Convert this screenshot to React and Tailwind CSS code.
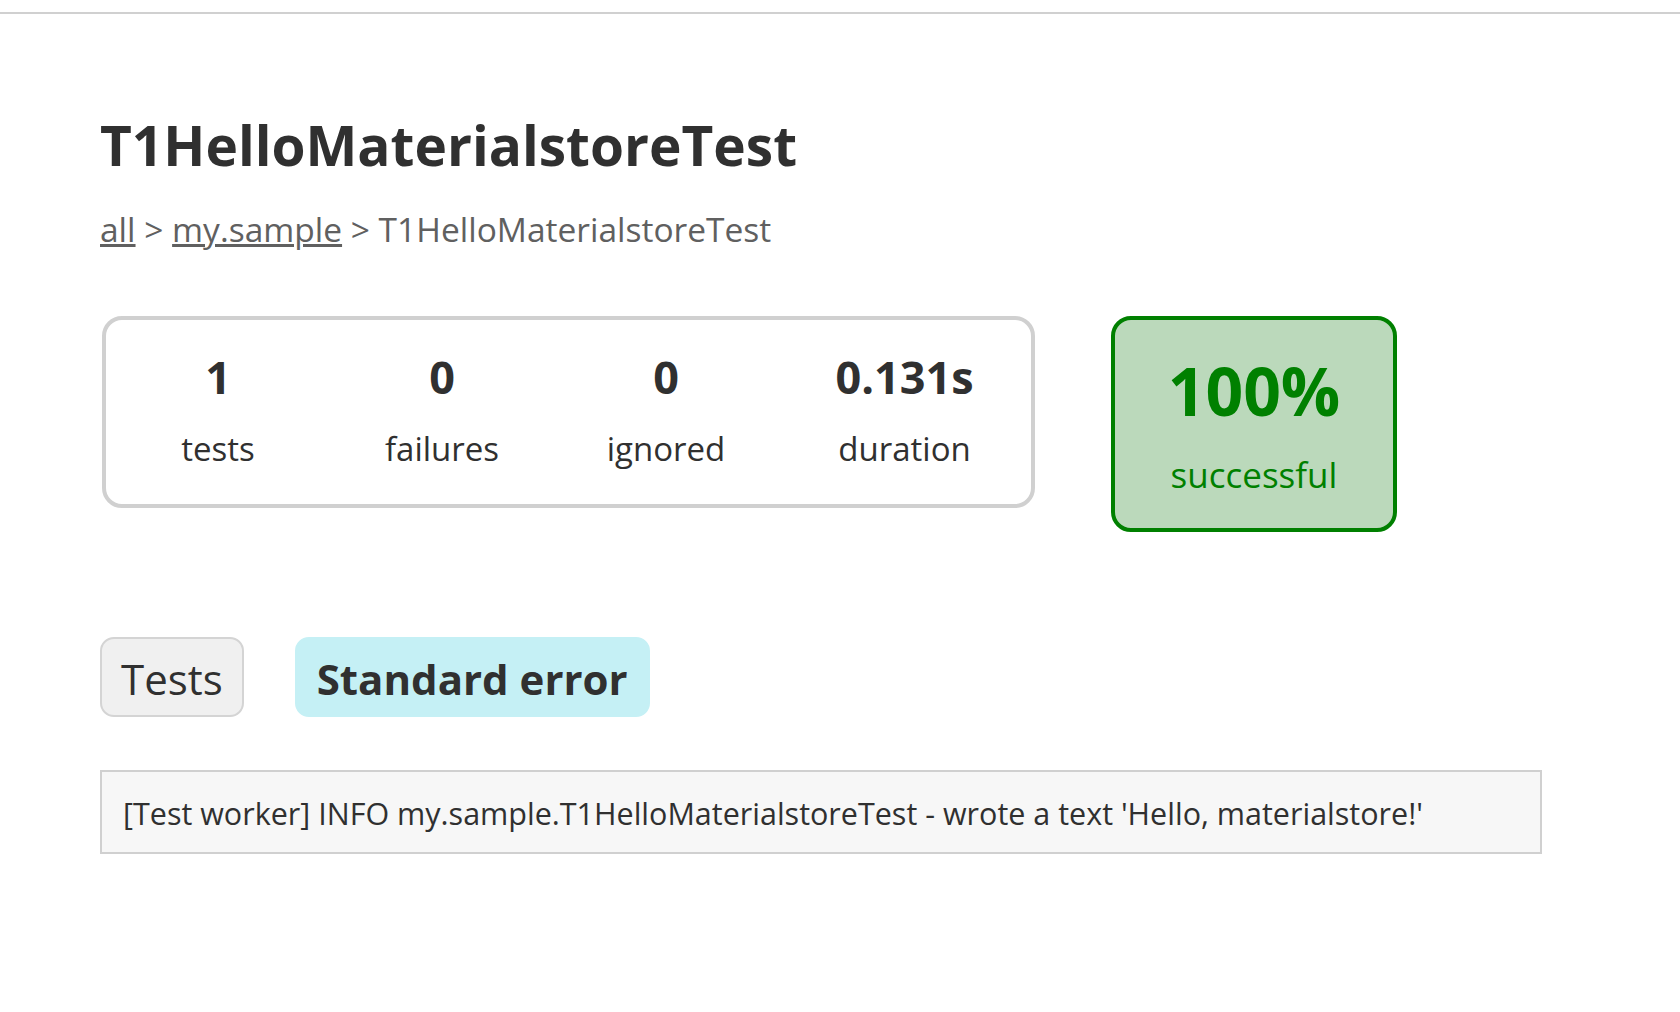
export default function App() {
  const stats = [
    { value: "1", label: "tests", w: "w-[224px]" },
    { value: "0", label: "failures", w: "w-[224px]" },
    { value: "0", label: "ignored", w: "w-[224px]" },
    { value: "0.131s", label: "duration", w: "flex-1" },
  ]

  return (
    <div className="min-h-screen w-full bg-white text-[#303030] font-['Open_Sans','Noto_Sans_CJK_JP',sans-serif]">
      <div className="h-[12px]" />
      <div className="border-t-2 border-[#d0d0d0]" />

      <div className="px-[100px] pt-[99px]">
        <h1 className="text-[55px] font-bold leading-[64px]">T1HelloMaterialstoreTest</h1>

        <div className="mt-[30px] text-[33.5px] leading-[44px] text-[#606060]">
          <a className="underline">all</a> &gt; <a className="underline">my.sample</a> &gt; T1HelloMaterialstoreTest
        </div>

        <div className="mt-[65px] flex items-start">
          <div className="ml-[2px] w-[933px] h-[192px] box-border flex border-[4px] border-[#d0d0d0] rounded-[20px] pt-[32px]">
            {stats.map((s) => (
              <div key={s.label} className={`${s.w} text-center`}>
                <div className="text-[45px] font-bold leading-[50px] mb-[25px]">{s.value}</div>
                <div className="text-[33px] leading-[44px]">{s.label}</div>
              </div>
            ))}
          </div>

          <div className="ml-[76px] w-[286px] h-[216px] box-border border-[4px] border-[#008000] bg-[#bbd9bb] rounded-[20px] text-[#008000] text-center pt-[35px]">
            <div className="text-[66px] font-bold leading-[70px] mb-[28px]">100%</div>
            <div className="text-[35px] leading-[44px]">successful</div>
          </div>
        </div>

        <div className="mt-[105px] flex">
          <div className="h-[80px] box-border px-[19px] pt-[3px] leading-[73px] rounded-[14px] border-2 border-[#d4d4d4] bg-[#f0f0f0] text-[42px] mr-[51px]">
            Tests
          </div>
          <div className="h-[80px] box-border px-[20px] pt-[3px] leading-[73px] rounded-[14px] border-2 border-[#c5f0f5] bg-[#c5f0f5] text-[42px] font-bold">
            Standard error
          </div>
        </div>

        <div className="mt-[53px] w-[1442px] h-[84px] box-border border-2 border-[#d0d0d0] bg-[#f7f7f7] px-[21px] pt-[21px] text-[30.5px] leading-[40px] whitespace-pre">
          [Test worker] INFO my.sample.T1HelloMaterialstoreTest - wrote a text 'Hello, materialstore!'
        </div>
      </div>
    </div>
  )
}
